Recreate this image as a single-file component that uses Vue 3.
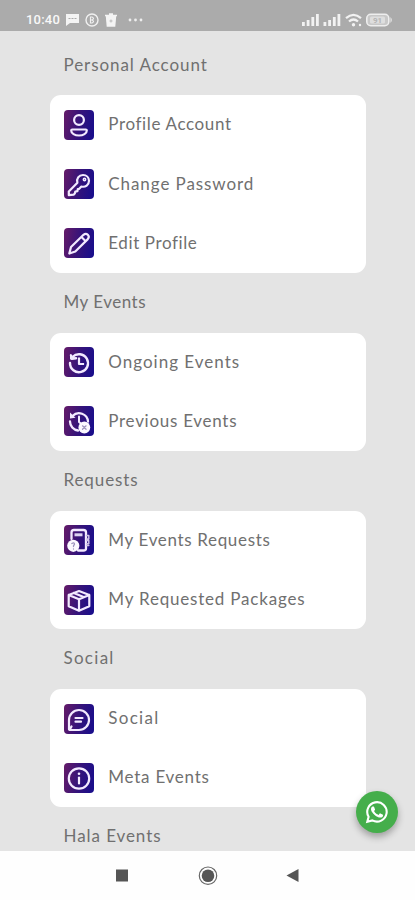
<template>
  <div class="screen">
    <header class="status-bar">
      <span class="time">10:40</span>
      <svg class="notices" width="78" height="16" viewBox="0 0 78 16">
        <path d="M1 2h13v9H5l-4 3z" fill="#f4f4f4" />
        <path d="M3.5 6.5h8" stroke="#aaa" stroke-width="1.2" stroke-dasharray="2 1" />
        <circle cx="27" cy="8" r="6" fill="none" stroke="#f0f0f0" stroke-width="1.4" />
        <path d="M25.5 4.5v7M25.5 5H27q3 1.500 0 3h-1.500M27 8q3 1.500 0 3h-1.500" fill="none" stroke="#f0f0f0" stroke-width="1.2" />
        <path d="M40 3.500h12M44 2h4M41.500 5h9l-.8 9h-7.400z" fill="#f4f4f4" stroke="#f4f4f4" stroke-width="1.3" />
        <path d="M44.500 9h3M46 7.500v3" stroke="#bbb" />
        <g fill="#eee">
          <circle cx="65" cy="8" r="1.4" />
          <circle cx="70.500" cy="8" r="1.4" />
          <circle cx="76" cy="8" r="1.4" />
        </g>
      </svg>
      <svg class="signals" width="92" height="16" viewBox="0 0 92 16">
        <g fill="#f2f2f2">
          <path d="M1 10h2.800v4H1zM5.700 8h2.800v6H5.700zM10.400 5h2.800v9h-2.800zM15 2h2.800v12H15z" />
          <path d="M22.500 10h2.800v4h-2.800zM27.200 8H30v6h-2.800zM31.900 5h2.800v9h-2.800zM36.500 2h2.800v12h-2.800z" />
          <circle cx="52.500" cy="12.800" r="1.7" />
          <circle cx="59" cy="13" r="1.2" />
        </g>
        <path d="M45 6.200q7.500-6.500 15 0M48 9.500q4.500-4 9 0" fill="none" stroke="#f2f2f2" stroke-width="2.2" />
        <rect x="65.800" y="2.300" width="22" height="11.400" rx="4" fill="#c8c8c8" stroke="#eee" stroke-width="1.6" />
        <rect x="69" y="4.500" width="15" height="7" rx="1.500" fill="#dedede" />
        <path d="M89.500 5q2.500 3 0 6z" fill="#eee" />
        <text x="76.500" y="10.800" text-anchor="middle" class="battery">91</text>
      </svg>
    </header>

    <main class="content">
      <section v-for="section in sections" :key="section.title">
        <h2 class="section-title" :style="{ letterSpacing: section.spacing + 'px' }">{{ section.title }}</h2>
        <div v-if="section.items.length" class="card">
          <div v-for="item in section.items" :key="item.label" class="row">
            <span class="tile">
              <svg width="30" height="30" viewBox="0 0 30 30" fill="none" stroke="#f3eaff" stroke-width="2.2" stroke-linecap="round" stroke-linejoin="round">
                <template v-if="item.icon === 'profile'">
                  <circle cx="15" cy="10" r="4.9" />
                  <path d="M8.200 19.500h13.600q1 0 1 1c0 3-3.600 5-7.800 5s-7.800-2-7.800-5q0-1 1-1z" />
                </template>
                <template v-else-if="item.icon === 'key'">
                  <path d="M13.400 13.800C12.200 9.800 14.800 6 19 6c3.500 0 6 2.500 6 5.800 0 4-3.600 6.800-7.600 5.700l-2.200 2.300-1.400.2-.4 2.200-2.100.4-.5 1.900-1.200 1.200-4.800.4v-3.600z" />
                  <circle cx="20.500" cy="10.500" r="1.2" stroke-width="1.5" />
                </template>
                <template v-else-if="item.icon === 'pencil'">
                  <path d="M5.300 25.500 7 19 19.500 6.800q2.300-2 4.300 0t0 4.300L11.300 23.500zM17.500 9l4.200 4.200" />
                </template>
                <template v-else-if="item.icon === 'ongoing'">
                  <path d="M8.500 10A9 9 0 1 1 6 16M7 8.500l1 3.300 4-.6" stroke-width="2.4" />
                  <path d="M6 7v5.500l5.500-.8z" fill="#f3eaff" stroke="none" />
                  <path d="M15 11.500V17h4" stroke-linecap="square" />
                </template>
                <template v-else-if="item.icon === 'previous'">
                  <path d="M8.500 10A9 9 0 0 1 24 15.500M6 15.500a9 9 0 0 0 8 9" stroke-width="2.3" />
                  <path d="M6 6.500v6l5.500-.8z" fill="#f3eaff" stroke="none" />
                  <path d="M15 10.500V16l2 1.500" stroke-width="2" />
                  <circle cx="20.300" cy="21.500" r="5.9" fill="#fbf8ff" stroke="none" />
                  <path d="m18.500 19.800 3.600 3.500m0-3.500-3.600 3.500" stroke="#9d93bd" stroke-width="1.2" />
                </template>
                <template v-else-if="item.icon === 'requests'">
                  <path d="M7.500 14V7.500Q7.500 5 10 5h9.500Q22 5 22 7.500v16q0 2-2.500 2H14" stroke-width="2.3" />
                  <path d="M10.500 8.300h8v3h-8z" fill="#ddd3f1" stroke="none" />
                  <path d="M22.500 10.500h2.300V14h-2M22.800 15.500h2v3.200h-2M22.800 20.500h2" stroke="#cfc3e8" stroke-width="1.5" />
                  <circle cx="9.300" cy="20.800" r="6.1" fill="#fbf8ff" stroke="none" />
                  <path d="M7.800 18.500q2.700-1.500 2.700.7l-1 1.600v.7M9.500 24v.1" stroke="#9d93bd" stroke-width="1.3" />
                </template>
                <template v-else-if="item.icon === 'package'">
                  <path d="M15 6 25.300 10v11.200L15 25.800 4.700 21.200V10zM4.700 10 15 14.300 25.300 10M15 14.300v11.200M9.800 8l10.400 4.200" />
                </template>
                <template v-else-if="item.icon === 'social'">
                  <path d="M5 25.500V16A10 10 0 1 1 15 26H5.500l2-3.500" />
                  <path d="M11.500 14h7M11.500 17.700H17" />
                </template>
                <template v-else>
                  <circle cx="15" cy="15.500" r="10.2" />
                  <path d="M15 14.500v6" />
                  <circle cx="15" cy="10.800" r="1.3" fill="#f3eaff" stroke="none" />
                </template>
              </svg>
            </span>
            <span class="label" :style="{ letterSpacing: item.spacing + 'px' }">{{ item.label }}</span>
          </div>
        </div>
      </section>
    </main>

    <button class="whatsapp" aria-label="WhatsApp">
      <svg width="24" height="24" viewBox="0 0 24 24" fill="#fff">
        <path d="M17.472 14.382c-.297-.149-1.758-.867-2.030-.967-.273-.099-.471-.148-.67.150-.197.297-.767.966-.94 1.164-.173.199-.347.223-.644.075-.297-.150-1.255-.463-2.390-1.475-.883-.788-1.480-1.761-1.653-2.059-.173-.297-.018-.458.130-.606.134-.133.298-.347.446-.520.149-.174.198-.298.298-.497.099-.198.050-.371-.025-.520-.075-.149-.669-1.612-.916-2.207-.242-.579-.487-.5-.669-.510-.173-.008-.371-.010-.570-.010-.198 0-.520.074-.792.372-.272.297-1.040 1.016-1.040 2.479 0 1.462 1.065 2.875 1.213 3.074.149.198 2.096 3.200 5.077 4.487.709.306 1.262.489 1.694.625.712.227 1.360.195 1.871.118.571-.085 1.758-.719 2.006-1.413.248-.694.248-1.289.173-1.413-.074-.124-.272-.198-.570-.347" />
        <path d="M2.300 21.700 3.600 16.800A9.700 9.700 0 1 1 7.300 20.400z" fill="none" stroke="#fff" stroke-width="2.1" />
      </svg>
    </button>

    <nav class="nav-bar">
      <svg width="20" height="20" viewBox="0 0 20 20"><path d="M4 3.500h12v12H4z" fill="#555" /></svg>
      <svg width="20" height="20" viewBox="0 0 20 20">
        <circle cx="10" cy="9.700" r="8.7" fill="none" stroke="#666" stroke-width="1.2" />
        <circle cx="10" cy="9.700" r="6.3" fill="#555" />
      </svg>
      <svg width="20" height="20" viewBox="0 0 20 20"><path d="M15.500 3v13L3.500 9.500z" fill="#555" /></svg>
    </nav>
  </div>
</template>

<script setup>
const sections = [
  {
    title: 'Personal Account',
    spacing: 0.93,
    items: [
      { label: 'Profile Account', icon: 'profile', spacing: 0.63 },
      { label: 'Change Password', icon: 'key', spacing: 0.92 },
      { label: 'Edit Profile', icon: 'pencil', spacing: 0.6 },
    ],
  },
  {
    title: 'My Events',
    spacing: 0.5,
    items: [
      { label: 'Ongoing Events', icon: 'ongoing', spacing: 1 },
      { label: 'Previous Events', icon: 'previous', spacing: 0.72 },
    ],
  },
  {
    title: 'Requests',
    spacing: 0.9,
    items: [
      { label: 'My Events Requests', icon: 'requests', spacing: 0.66 },
      { label: 'My Requested Packages', icon: 'package', spacing: 0.8 },
    ],
  },
  {
    title: 'Social',
    spacing: 1.28,
    items: [
      { label: 'Social', icon: 'social', spacing: 1.28 },
      { label: 'Meta Events', icon: 'info', spacing: 0.75 },
    ],
  },
  { title: 'Hala Events', spacing: 0.93, items: [] },
]
</script>

<style>
body {
  margin: 0;
}
</style>

<style scoped>
.screen {
  position: relative;
  display: flex;
  flex-direction: column;
  width: 415px;
  height: 900px;
  overflow: hidden;
  background: #e4e4e4;
  font-family: Lato, "Open Sans", sans-serif;
}

.status-bar {
  display: flex;
  align-items: center;
  flex: none;
  box-sizing: border-box;
  height: 31px;
  padding: 8px 22px 0 26px;
  background: #ababab;
}

.time {
  width: 34px;
  font: 500 13px/16px Roboto, sans-serif;
  letter-spacing: 0.2px;
  color: #f8f8f8;
}

.notices {
  margin-left: 5px;
}

.signals {
  margin-left: auto;
}

.battery {
  font: 700 8px Roboto, sans-serif;
  fill: #b5b5b5;
}

.content {
  flex: 1;
  min-height: 0;
  padding: 4.5px 49px 0 49.5px;
  overflow: hidden;
}

.section-title {
  height: 59.8px;
  margin: 0;
  padding-left: 14px;
  font-size: 17px;
  font-weight: 400;
  line-height: 58.5px;
  color: #707070;
  white-space: nowrap;
}

.card {
  border-radius: 11px;
  background: #fff;
}

.row {
  display: flex;
  align-items: center;
  height: 59.2px;
  padding-left: 14.5px;
}

.tile {
  width: 30px;
  height: 30px;
  border-radius: 4px;
  background: linear-gradient(100deg, #651b68 0%, #35137a 50%, #160d8d 100%);
}

.tile svg {
  display: block;
}

.label {
  margin-left: 14.3px;
  font-size: 17px;
  line-height: 24px;
  padding-bottom: 0.8px;
  color: #707070;
  white-space: nowrap;
}

.whatsapp {
  position: absolute;
  right: 17px;
  bottom: 67px;
  display: flex;
  align-items: center;
  justify-content: center;
  width: 42px;
  height: 42px;
  padding: 0;
  border: 0;
  border-radius: 50%;
  background: #45ae4b;
  box-shadow: 0 4px 7px rgba(0, 0, 0, 0.3);
}

.nav-bar {
  display: flex;
  align-items: center;
  justify-content: space-between;
  flex: none;
  box-sizing: border-box;
  height: 49px;
  padding: 0 112px;
  background: #fefefe;
}
</style>
